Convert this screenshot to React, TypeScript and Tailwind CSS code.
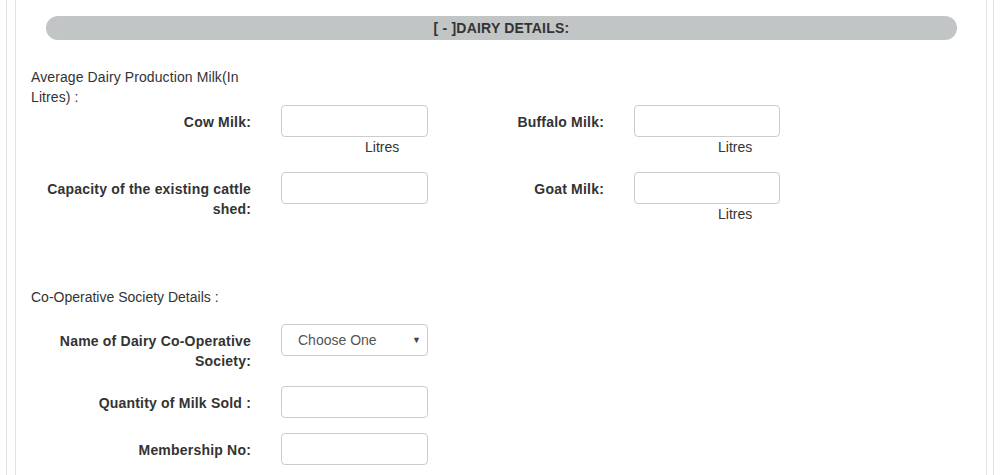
import React from "react";

const font = { fontFamily: '"Liberation Sans", Arial, sans-serif' };

function Input() {
  return <div className="h-[32px] w-full rounded-[4px] border border-[#cccccc] bg-white" />;
}

function Field({
  label,
  labelW,
  inputW,
  litres,
  select,
}: {
  label: string;
  labelW: string;
  inputW: string;
  litres?: boolean;
  select?: boolean;
}) {
  return (
    <div className="flex items-start">
      <div className={`${labelW} pt-[7px] text-right text-[14px] font-bold leading-[20px] tracking-[0.2px] text-[#333333]`}>{label}</div>
      <div className={`ml-[30px] ${inputW}`}>
        {select ? (
          <div className="relative flex h-[32px] w-full items-center rounded-[4px] border border-[#cccccc] bg-white pl-[16px] text-[14px] text-[#555555]">
            Choose One
            <span className="absolute right-[6px] top-[9px] text-[9px] leading-[12px] text-[#444]">▼</span>
          </div>
        ) : (
          <Input />
        )}
        {litres && <div className="pl-[84px] text-[14px] leading-[20px] text-[#333333]">Litres</div>}
      </div>
    </div>
  );
}

export default function App() {
  return (
    <div className="h-[475px] w-[1002px] overflow-hidden bg-white" style={font}>
      <div className="ml-[6px] h-full w-[988px] border-x border-[#e2e2e2] pl-[8px] pr-[6px]">
        <div className="h-full w-[972px] border-x border-[#e2e2e2] pl-[15px] pt-[16px]">
          <div className="ml-[15px] flex h-[24px] w-[911px] items-center justify-center rounded-[12px] bg-[#c2c5c5] text-[14px] font-bold tracking-[0.2px] text-[#333333]">
            [ - ]DAIRY DETAILS:
          </div>
          <div className="mt-[27px] w-[230px] text-[14px] leading-[20px] tracking-[0.1px] text-[#333333]">
            Average Dairy Production Milk(In Litres) :
          </div>
          <div className="-mt-[2px] flex">
            <Field label="Cow Milk:" labelW="w-[220px]" inputW="w-[147px]" litres />
            <Field label="Buffalo Milk:" labelW="w-[176px]" inputW="w-[146px]" litres />
          </div>
          <div className="mt-[15px] flex">
            <Field label="Capacity of the existing cattle shed:" labelW="w-[220px]" inputW="w-[147px]" />
            <Field label="Goat Milk:" labelW="w-[176px]" inputW="w-[146px]" litres />
          </div>
          <div className="mt-[63px] text-[14px] leading-[20px] text-[#333333]">Co-Operative Society Details :</div>
          <div className="mt-[17px]">
            <Field label="Name of Dairy Co-Operative Society:" labelW="w-[220px]" inputW="w-[147px]" select />
          </div>
          <div className="mt-[15px]">
            <Field label="Quantity of Milk Sold :" labelW="w-[220px]" inputW="w-[147px]" />
          </div>
          <div className="mt-[15px]">
            <Field label="Membership No:" labelW="w-[220px]" inputW="w-[147px]" />
          </div>
        </div>
      </div>
    </div>
  );
}
